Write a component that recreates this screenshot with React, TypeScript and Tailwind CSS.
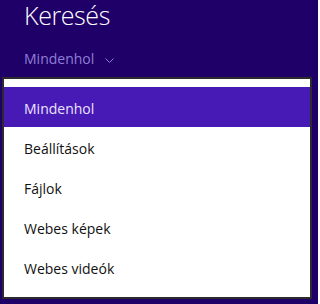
import React from "react";

const items = ["Mindenhol", "Beállítások", "Fájlok", "Webes képek", "Webes videók"];

export default function App() {
  return (
    <div className="w-[318px] h-[304px] overflow-hidden bg-[#1f0068] font-['Open_Sans',sans-serif]">
      <div className="pl-6 h-[30px] text-[25px] leading-[30px] tracking-[-0.4px] font-light text-white">Keresés</div>
      <div className="mt-[21px] pl-6 h-[15px] flex items-center gap-[11px] text-[14px] leading-[15px] text-[#8f7fd6]">
        <span>Mindenhol</span>
        <svg width="9" height="5" viewBox="0 0 9 5" className="mt-[3px]">
          <polyline points="0.5,0.5 4.5,4.5 8.5,0.5" fill="none" stroke="#8f7fd6" strokeWidth="1" />
        </svg>
      </div>
      <div className="mt-[11px] ml-[2px] w-[310px] border-2 border-[#2b2b2b] bg-white pt-[8px] pb-[10px]">
        {items.map((t, i) => (
          <div
            key={t}
            className={
              i === 0
                ? "h-10 pt-[3px] pl-5 text-[14px] leading-[37px] bg-[#4719b5] text-[#ece4ff]"
                : "h-10 pt-[3px] pl-5 text-[14px] leading-[37px] text-[#111111]"
            }
          >
            {t}
          </div>
        ))}
      </div>
    </div>
  );
}
